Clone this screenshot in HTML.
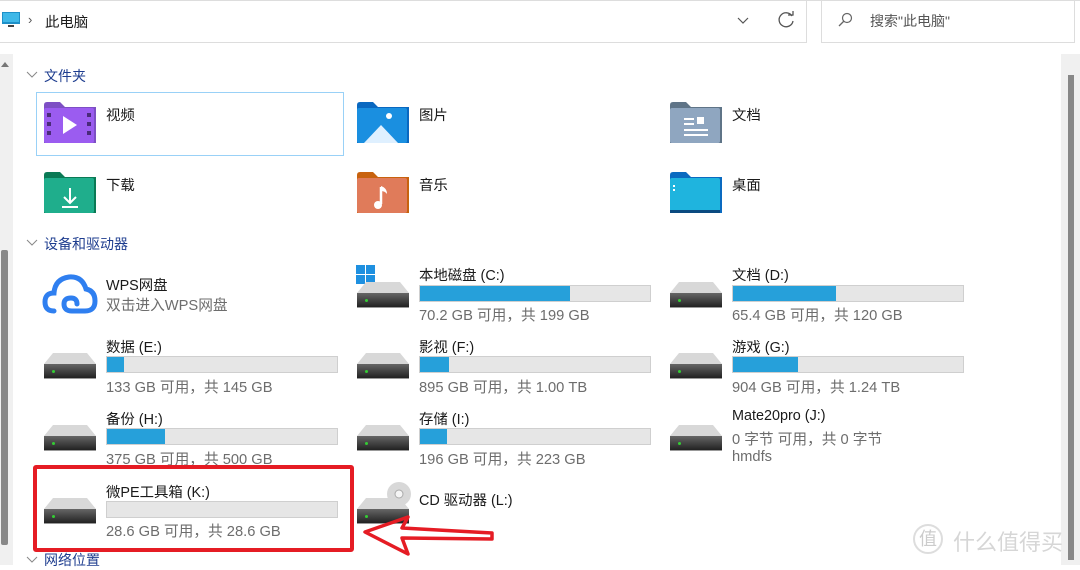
<!DOCTYPE html>
<html><head><meta charset="utf-8"><style>
*{margin:0;padding:0;box-sizing:border-box}
body{width:1080px;height:565px;overflow:hidden;background:#fff;position:relative;font-family:"Liberation Sans","Noto Sans CJK SC",sans-serif;color:#111}
.a{position:absolute;white-space:nowrap}
.n{font-size:14.4px;color:#1a1a1a}
.s{font-size:14.7px;color:#6d6d6d}
.h{font-size:14px;color:#1e3d8f}
.bar{position:absolute;width:232px;height:17px;background:#e6e6e6;border:1px solid #cfcfcf}
.bar i{display:block;height:100%;background:#26a0da}
.drv{position:absolute;width:52px;height:26px}
.drv .t{position:absolute;left:0;top:0;width:52px;height:0;border-bottom:11px solid #d8d8d8;border-left:9px solid transparent;border-right:9px solid transparent}
.drv .b{position:absolute;left:0;top:11px;width:52px;height:15px;background:linear-gradient(#666,#222);border-bottom:1px solid #999}
.drv .b:after{content:"";position:absolute;left:8px;top:6px;width:3px;height:3px;background:#3c3;border-radius:50%}
.fold{position:absolute;width:52px;height:42px}
</style></head><body>
<div class="a" style="left:0;top:0;width:1080px;height:1px;background:#ddd"></div>
<div class="a" style="left:-2px;top:0;width:809px;height:43px;border:1px solid #ddd;border-top:none"></div>
<div class="a" style="left:821px;top:0;width:254px;height:43px;border:1px solid #ddd;border-top:none"></div>
<svg class="a" style="left:2px;top:12px" width="20" height="18"><rect x="0" y="0" width="18" height="12" fill="#1e90c8"/><rect x="1" y="1" width="16" height="9" fill="#3fb8e8"/><rect x="6" y="13" width="6" height="2" fill="#444"/></svg>
<div class="a" style="left:28px;top:12px;font-size:13px;color:#555">›</div>
<div class="a n" style="left:45px;top:11px">此电脑</div>
<svg class="a" style="left:736px;top:14px" width="14" height="12"><path d="M2 4 L7 9 L12 4" stroke="#555" fill="none" stroke-width="1.2"/></svg>
<svg class="a" style="left:776px;top:10px" width="20" height="20"><path d="M16 6 A7 7 0 1 0 17 11" stroke="#555" fill="none" stroke-width="1.3"/><path d="M12 5 L17 5 L17 1" stroke="#555" fill="none" stroke-width="1.3"/></svg>
<svg class="a" style="left:837px;top:12px" width="16" height="16"><circle cx="10" cy="6" r="4.5" stroke="#666" fill="none" stroke-width="1.2"/><path d="M7 9 L2 14" stroke="#666" stroke-width="1.3"/></svg>
<div class="a" style="left:870px;top:11px;font-size:14px;color:#555">搜索"此电脑"</div>
<div class="a" style="left:0;top:54px;width:13px;height:511px;background:#f0f0f0"></div>
<svg class="a" style="left:0;top:60px" width="10" height="8"><path d="M1 7 L5 2 L9 7Z" fill="#777"/></svg>
<div class="a" style="left:1px;top:250px;width:7px;height:295px;background:#888;border-radius:2px"></div>
<div class="a" style="left:1061px;top:54px;width:19px;height:511px;background:#f0f0f0"></div>
<div class="a" style="left:1068px;top:75px;width:6px;height:485px;background:#888"></div>
<svg class="a" style="left:26px;top:71px" width="12" height="8"><path d="M1 1 L6 6 L11 1" stroke="#888" fill="none"/></svg>
<div class="a h" style="left:44px;top:66px">文件夹</div>
<svg class="a" style="left:26px;top:239px" width="12" height="8"><path d="M1 1 L6 6 L11 1" stroke="#888" fill="none"/></svg>
<div class="a h" style="left:44px;top:234px">设备和驱动器</div>
<svg class="a" style="left:26px;top:556px" width="12" height="8"><path d="M1 1 L6 6 L11 1" stroke="#888" fill="none"/></svg>
<div class="a h" style="left:44px;top:550px">网络位置</div>
<div class="a" style="left:36px;top:92px;width:308px;height:64px;border:1px solid #99d1f7"></div>
<svg class="fold" style="left:44px;top:101px"><path d="M0 4 Q0 1 3 1 L16 1 L21 6 L52 6 L52 42 L0 42Z" fill="#7d4fc4"/><rect x="0" y="7" width="50" height="35" rx="2" fill="#9b5cf0"/><rect x="3" y="12" width="4" height="4" fill="#4a2b7a"/><rect x="3" y="21" width="4" height="4" fill="#4a2b7a"/><rect x="3" y="30" width="4" height="4" fill="#4a2b7a"/><rect x="43" y="12" width="4" height="4" fill="#4a2b7a"/><rect x="43" y="21" width="4" height="4" fill="#4a2b7a"/><rect x="43" y="30" width="4" height="4" fill="#4a2b7a"/><path d="M19 15 L33 24 L19 33Z" fill="#fff"/></svg>
<div class="a n" style="left:106px;top:104px">视频</div>
<svg class="fold" style="left:357px;top:101px"><path d="M0 4 Q0 1 3 1 L16 1 L21 6 L52 6 L52 42 L0 42Z" fill="#0a68c0"/><rect x="0" y="7" width="50" height="35" rx="2" fill="#1a8fe0"/><path d="M7 42 L24 24 L41 42Z" fill="#dff0ff"/><circle cx="32" cy="15" r="3" fill="#fff"/></svg>
<div class="a n" style="left:419px;top:104px">图片</div>
<svg class="fold" style="left:670px;top:101px"><path d="M0 4 Q0 1 3 1 L16 1 L21 6 L52 6 L52 42 L0 42Z" fill="#5f7487"/><rect x="0" y="7" width="50" height="35" rx="2" fill="#8fa6c0"/><rect x="14" y="17" width="10" height="2" fill="#fff"/><rect x="14" y="22" width="10" height="2" fill="#fff"/><rect x="27" y="16" width="7" height="7" fill="#fff"/><rect x="14" y="28" width="24" height="2" fill="#fff"/><rect x="14" y="33" width="24" height="2" fill="#fff"/></svg>
<div class="a n" style="left:732px;top:104px">文档</div>
<svg class="fold" style="left:44px;top:171px"><path d="M0 4 Q0 1 3 1 L16 1 L21 6 L52 6 L52 42 L0 42Z" fill="#0a7a55"/><rect x="0" y="7" width="50" height="35" rx="2" fill="#1fae8c"/><path d="M26 17 L26 32 M20 26 L26 32 L32 26 M18 36 L34 36" stroke="#fff" stroke-width="2" fill="none"/></svg>
<div class="a n" style="left:106px;top:174px">下载</div>
<svg class="fold" style="left:357px;top:171px"><path d="M0 4 Q0 1 3 1 L16 1 L21 6 L52 6 L52 42 L0 42Z" fill="#c8620e"/><rect x="0" y="7" width="50" height="35" rx="2" fill="#e07b5a"/><path d="M24 16 L24 33" stroke="#fff" stroke-width="2.5"/><path d="M24 15 Q30 17 30 23 Q28 20 24 20Z" fill="#fff"/><circle cx="21" cy="34" r="4" fill="#fff"/></svg>
<div class="a n" style="left:419px;top:174px">音乐</div>
<svg class="fold" style="left:670px;top:171px"><path d="M0 4 Q0 1 3 1 L16 1 L21 6 L52 6 L52 42 L0 42Z" fill="#0a6ac0"/><rect x="0" y="7" width="50" height="35" rx="2" fill="#1fb4de"/><rect x="0" y="39" width="50" height="3" fill="#0a4a80"/><rect x="3" y="14" width="2" height="2" fill="#fff"/><rect x="3" y="18" width="2" height="2" fill="#fff"/></svg>
<div class="a n" style="left:732px;top:174px">桌面</div>
<svg class="a" style="left:42px;top:271px" width="56" height="44"><path d="M12 40 Q3 40 3 31 Q3 22 12 22 Q13 8 27 6 Q40 5 44 18 Q53 20 53 30 Q53 40 43 40 L30 40 Q22 40 22 33 Q22 27 29 27 Q35 27 35 33" stroke="#2f7ff0" stroke-width="5" fill="none" stroke-linecap="round"/></svg>
<div class="a n" style="left:106px;top:274px">WPS网盘</div>
<div class="a s" style="left:106px;top:294px">双击进入WPS网盘</div>
<svg class="a" style="left:356px;top:265px" width="22" height="22"><rect x="0" y="0" width="9" height="9" fill="#1e90e0"/><rect x="10" y="0" width="9" height="9" fill="#1e90e0"/><rect x="0" y="10" width="9" height="9" fill="#1e90e0"/><rect x="10" y="10" width="9" height="9" fill="#1e90e0"/></svg>
<div class="drv" style="left:357px;top:282px"><div class="t"></div><div class="b"></div></div>
<div class="a n" style="left:419px;top:264px">本地磁盘 (C:)</div>
<div class="bar" style="left:419px;top:285px"><i style="width:150px"></i></div>
<div class="a s" style="left:419px;top:304px">70.2 GB 可用，共 199 GB</div>
<div class="drv" style="left:670px;top:282px"><div class="t"></div><div class="b"></div></div>
<div class="a n" style="left:732px;top:264px">文档 (D:)</div>
<div class="bar" style="left:732px;top:285px"><i style="width:103px"></i></div>
<div class="a s" style="left:732px;top:304px">65.4 GB 可用，共 120 GB</div>
<div class="drv" style="left:44px;top:353px"><div class="t"></div><div class="b"></div></div>
<div class="a n" style="left:106px;top:336px">数据 (E:)</div>
<div class="bar" style="left:106px;top:356px"><i style="width:17px"></i></div>
<div class="a s" style="left:106px;top:376px">133 GB 可用，共 145 GB</div>
<div class="drv" style="left:357px;top:353px"><div class="t"></div><div class="b"></div></div>
<div class="a n" style="left:419px;top:336px">影视 (F:)</div>
<div class="bar" style="left:419px;top:356px"><i style="width:29px"></i></div>
<div class="a s" style="left:419px;top:376px">895 GB 可用，共 1.00 TB</div>
<div class="drv" style="left:670px;top:353px"><div class="t"></div><div class="b"></div></div>
<div class="a n" style="left:732px;top:336px">游戏 (G:)</div>
<div class="bar" style="left:732px;top:356px"><i style="width:65px"></i></div>
<div class="a s" style="left:732px;top:376px">904 GB 可用，共 1.24 TB</div>
<div class="drv" style="left:44px;top:425px"><div class="t"></div><div class="b"></div></div>
<div class="a n" style="left:106px;top:408px">备份 (H:)</div>
<div class="bar" style="left:106px;top:428px"><i style="width:58px"></i></div>
<div class="a s" style="left:106px;top:448px">375 GB 可用，共 500 GB</div>
<div class="drv" style="left:357px;top:425px"><div class="t"></div><div class="b"></div></div>
<div class="a n" style="left:419px;top:408px">存储 (I:)</div>
<div class="bar" style="left:419px;top:428px"><i style="width:27px"></i></div>
<div class="a s" style="left:419px;top:448px">196 GB 可用，共 223 GB</div>
<div class="drv" style="left:670px;top:425px"><div class="t"></div><div class="b"></div></div>
<div class="a n" style="left:732px;top:408px">Mate20pro (J:)</div>
<div class="a s" style="left:732px;top:428px">0 字节 可用，共 0 字节</div>
<div class="a s" style="left:732px;top:449px">hmdfs</div>
<div class="drv" style="left:44px;top:498px"><div class="t"></div><div class="b"></div></div>
<div class="a n" style="left:106px;top:481px">微PE工具箱 (K:)</div>
<div class="bar" style="left:106px;top:501px"></div>
<div class="a s" style="left:106px;top:520px">28.6 GB 可用，共 28.6 GB</div>
<div class="drv" style="left:357px;top:498px"><div class="t"></div><div class="b"></div></div>
<svg class="a" style="left:385px;top:480px" width="28" height="28"><circle cx="14" cy="14" r="12" fill="#d8d8d8"/><circle cx="14" cy="14" r="4" fill="#f5f5f5" stroke="#aaa"/></svg>
<div class="a n" style="left:419px;top:489px">CD 驱动器 (L:)</div>
<div class="a" style="left:33px;top:465px;width:321px;height:87px;border:4px solid #e51c24;border-radius:3px"></div>
<svg class="a" style="left:0;top:0" width="1080" height="565"><path d="M365 532 L408 517 L402 528 L492 533 L492 539 L402 538 L408 554Z" stroke="#e51c24" stroke-width="3.5" fill="none" stroke-linejoin="round"/></svg>
<div class="a" style="left:913px;top:524px;width:30px;height:30px;border:2px solid #ddd;border-radius:50%;font-size:18px;color:#ccc;text-align:center;line-height:26px">值</div>
<div class="a" style="left:953px;top:525px;font-size:22px;color:#d6d6d6">什么值得买</div>
</body></html>
